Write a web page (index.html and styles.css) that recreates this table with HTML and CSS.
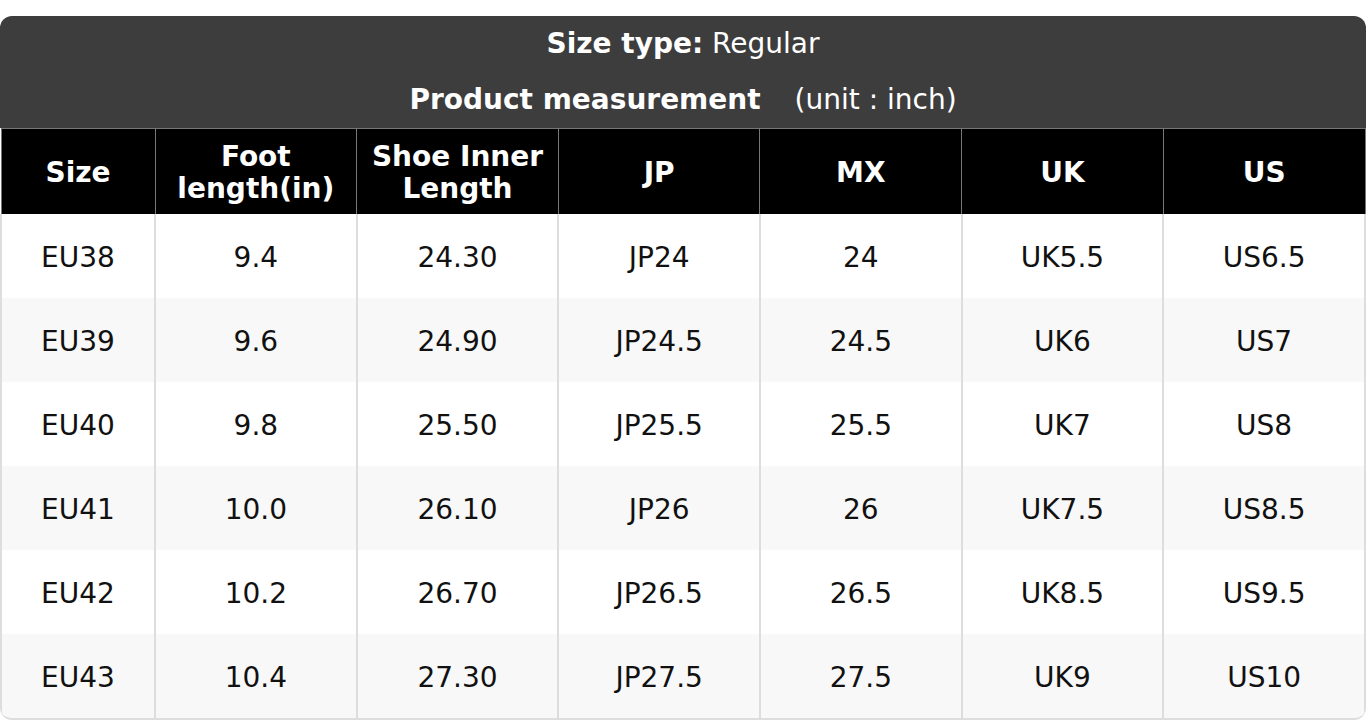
FILE: index.html
```html
<!DOCTYPE html>
<html>
<head>
<meta charset="utf-8">
<link rel="stylesheet" href="styles.css">
</head>
<body>
<div class="sheet">
  <div class="title">
    <div class="title-line"><b>Size type:</b> Regular</div>
    <div class="title-line"><b>Product measurement</b><span class="unit">(unit : inch)</span></div>
  </div>
  <table class="chart">
    <colgroup>
      <col class="c-first"><col><col><col><col><col><col>
    </colgroup>
    <thead>
      <tr>
        <th>Size</th>
        <th>Foot<br>length(in)</th>
        <th>Shoe Inner<br>Length</th>
        <th>JP</th>
        <th>MX</th>
        <th>UK</th>
        <th>US</th>
      </tr>
    </thead>
    <tbody>
      <tr><td>EU38</td><td>9.4</td><td>24.30</td><td>JP24</td><td>24</td><td>UK5.5</td><td>US6.5</td></tr>
      <tr><td>EU39</td><td>9.6</td><td>24.90</td><td>JP24.5</td><td>24.5</td><td>UK6</td><td>US7</td></tr>
      <tr><td>EU40</td><td>9.8</td><td>25.50</td><td>JP25.5</td><td>25.5</td><td>UK7</td><td>US8</td></tr>
      <tr><td>EU41</td><td>10.0</td><td>26.10</td><td>JP26</td><td>26</td><td>UK7.5</td><td>US8.5</td></tr>
      <tr><td>EU42</td><td>10.2</td><td>26.70</td><td>JP26.5</td><td>26.5</td><td>UK8.5</td><td>US9.5</td></tr>
      <tr><td>EU43</td><td>10.4</td><td>27.30</td><td>JP27.5</td><td>27.5</td><td>UK9</td><td>US10</td></tr>
    </tbody>
  </table>
</div>
</body>
</html>
```

FILE: styles.css
```css
html, body {
  margin: 0;
  padding: 0;
  background: #ffffff;
}
body {
  padding-top: 16px;
  font-family: "DejaVu Sans", sans-serif;
  font-size: 28px;
  color: #111111;
}
.sheet {
  border-radius: 12px;
  overflow: hidden;
  border-bottom: 2px solid #dddddd;
  box-sizing: border-box;
}
.title {
  background: #3d3d3d;
  color: #ffffff;
  text-align: center;
}
.title-line {
  height: 56px;
  line-height: 56px;
}
.unit {
  margin-left: 34px;
}
.chart {
  width: 100%;
  border-collapse: collapse;
  table-layout: fixed;
}
.c-first {
  width: 154px;
}
.chart th {
  background: #000000;
  color: #ffffff;
  font-weight: bold;
  height: 83px;
  padding: 2px 0 0;
  line-height: 32px;
  border: 1px solid #777777;
  border-bottom: none;
}
.chart td {
  height: 81px;
  padding: 3px 0 0;
  text-align: center;
  border-left: 2px solid #dddddd;
  border-right: 2px solid #dddddd;
}
.chart tbody tr:nth-child(even) td {
  background: #f8f8f8;
}
```
